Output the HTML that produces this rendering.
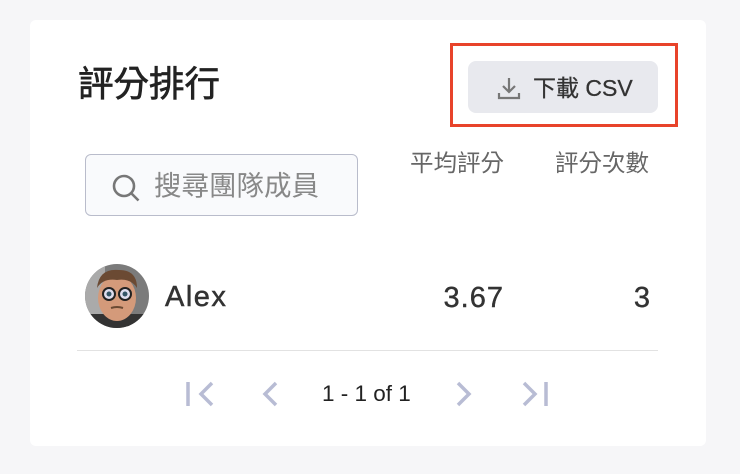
<!DOCTYPE html>
<html><head><meta charset="utf-8"><style>
body{margin:0;width:740px;height:474px;background:#f6f6f8;font-family:"Liberation Sans","Noto Sans CJK TC",sans-serif;position:relative;overflow:hidden}
.card{position:absolute;left:30px;top:20px;width:676px;height:426px;background:#fff;border-radius:6px}
.a{position:absolute;white-space:nowrap}
</style></head><body>
<div class="card"></div>
<div class="a" style="left:78px;top:62px;font-size:35.5px;color:#222;line-height:44px;-webkit-text-stroke:0.7px #222">評分排行</div>
<div class="a" style="left:450px;top:43px;width:222px;height:78px;border:3px solid #e8432a"></div>
<div class="a" style="left:468px;top:61px;width:190px;height:52px;background:#e8e9ee;border-radius:8px"></div>
<svg class="a" style="left:496px;top:75px" width="26" height="26" viewBox="0 0 26 26" fill="none" stroke="#777" stroke-width="2.2"><path d="M13 3v14M7 11l6 6 6-6M3 18v5h20v-5"/></svg>
<div class="a" style="left:533px;top:73px;font-size:23px;color:#333;line-height:30px;-webkit-text-stroke:0.3px #333">下載 CSV</div>
<div class="a" style="left:85px;top:154px;width:271px;height:60px;border:1.5px solid #b9bccb;border-radius:6px;background:#f9fafc"></div>
<svg class="a" style="left:110px;top:172px" width="32" height="32" viewBox="0 0 32 32" fill="none" stroke="#777" stroke-width="2.6"><circle cx="14" cy="14" r="10"/><path d="M21.5 21.5l7 7"/></svg>
<div class="a" style="left:154px;top:169px;font-size:27.5px;color:#888;line-height:34px">搜尋團隊成員</div>
<div class="a" style="left:410px;top:148px;font-size:23.5px;color:#666;line-height:30px">平均評分</div>
<div class="a" style="left:555px;top:148px;font-size:23.5px;color:#666;line-height:30px">評分次數</div>
<svg class="a" style="left:85px;top:264px" width="64" height="64" viewBox="0 0 64 64">
<defs><clipPath id="c"><circle cx="32" cy="32" r="32"/></clipPath></defs>
<g clip-path="url(#c)"><rect width="64" height="64" fill="#7b7b7b"/><rect x="0" y="0" width="20" height="64" fill="#aaa"/>
<rect x="0" y="50" width="64" height="14" fill="#333"/>
<ellipse cx="32" cy="34" rx="19" ry="23" fill="#d49a7a"/>
<path d="M12 24 Q14 4 34 6 Q52 6 52 24 Q46 14 32 16 Q18 14 12 24Z" fill="#6b4a33"/>
<circle cx="24" cy="30" r="6" fill="#dde" stroke="#222" stroke-width="2"/><circle cx="40" cy="30" r="6" fill="#dde" stroke="#222" stroke-width="2"/>
<circle cx="24" cy="30" r="2.5" fill="#356"/><circle cx="40" cy="30" r="2.5" fill="#356"/>
<path d="M26 44 Q32 42 38 44" stroke="#6b4a33" stroke-width="2" fill="none"/></g></svg>
<div class="a" style="left:165px;top:279px;font-size:29px;letter-spacing:1.5px;color:#333;line-height:36px;-webkit-text-stroke:0.5px #333">Alex</div>
<div class="a" style="left:404px;width:100px;text-align:right;top:280px;font-size:29px;letter-spacing:1px;color:#333;line-height:36px;-webkit-text-stroke:0.4px #333">3.67</div>
<div class="a" style="left:550px;width:100px;text-align:right;top:280px;font-size:29px;color:#333;line-height:36px;-webkit-text-stroke:0.4px #333">3</div>
<div class="a" style="left:77px;top:350px;width:581px;height:1px;background:#e2e2e2"></div>
<svg class="a" style="left:180px;top:378px" width="380" height="32" viewBox="0 0 380 32" fill="none" stroke="#b8bcd4" stroke-width="3.5">
<path d="M8 4v24M32 5l-11 11 11 11"/>
<path d="M96 5l-11 11 11 11"/>
<path d="M278 5l11 11-11 11"/>
<path d="M344 5l11 11-11 11M366 4v24"/></svg>
<div class="a" style="left:322px;top:380px;font-size:22.5px;color:#222;line-height:28px">1 - 1 of 1</div>
</body></html>
